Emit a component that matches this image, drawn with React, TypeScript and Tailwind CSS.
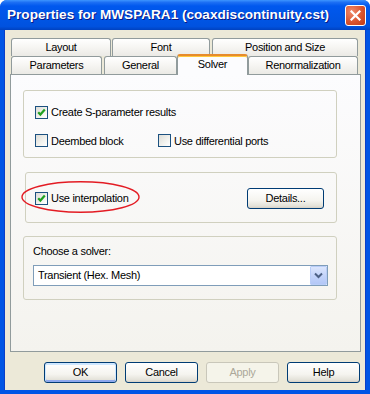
import React from 'react';

function Check({ checked }: { checked?: boolean }) {
  return (
    <span className="flex h-[13px] w-[13px] shrink-0 items-center justify-center border border-[#1C5180] bg-[linear-gradient(135deg,#DCDCD7_0%,#F3F3EF_60%,#FFFFFF_100%)]">
      {checked && (
        <svg width="9" height="9" viewBox="0 0 9 9">
          <polyline points="1.2,4.2 3.4,6.6 7.8,1.6" fill="none" stroke="#21A121" strokeWidth="2.2" />
        </svg>
      )}
    </span>
  );
}

function Btn({ label, disabled, focused, className }: { label: string; disabled?: boolean; focused?: boolean; className: string }) {
  let cls = 'flex h-[21px] items-center justify-center rounded-[3px] border text-[11px] ';
  if (disabled) cls += 'border-[#C9C7BA] bg-[#F5F4EA] text-[#ACA899] ';
  else cls += 'border-[#003C74] bg-[linear-gradient(to_bottom,#FFFFFF_0%,#F5F4EF_60%,#E3E1D8_90%,#D6D0C5_100%)] text-black ';
  if (focused) cls += 'shadow-[inset_0_1px_0_1px_#CEE7FF,inset_0_-1px_0_1px_#8DA8EE] ';
  return <div className={cls + className}>{label}</div>;
}

function Tab({ label, className }: { label: string; className: string }) {
  return (
    <div className={'flex h-[18px] items-center justify-center rounded-t-[3px] border border-b-0 border-[#919B9C] bg-[linear-gradient(to_bottom,#FFFFFF_0%,#F6F5F2_50%,#EBEAE5_100%)] text-[11px] ' + className}>
      {label}
    </div>
  );
}

export default function App() {
  return (
    <div className="h-[394px] w-[370px] overflow-hidden bg-white font-['Liberation_Sans',Arial,sans-serif] tracking-[-0.3px] text-black">
      <div className="flex h-full flex-col rounded-t-[7px] bg-[#0055E5]">
        {/* title bar */}
        <div className="flex h-[30px] shrink-0 items-center justify-between rounded-t-[7px] bg-[linear-gradient(to_bottom,#3D95FF_0%,#1C6FF4_8%,#0058EE_20%,#0055E5_60%,#0052DF_88%,#0042C0_100%)] pl-[7px] pr-[4px]">
          <span className="text-[13.6px] font-bold tracking-normal text-white [text-shadow:1px_1px_#0A1883]">
            Properties for MWSPARA1 (coaxdiscontinuity.cst)
          </span>
          <div className="flex h-[21px] w-[21px] items-center justify-center rounded-[3px] border border-white bg-[radial-gradient(circle_at_30%_30%,#F08B6C_0%,#D9542F_55%,#C23A14_100%)]">
            <svg width="11" height="11" viewBox="0 0 11 11">
              <path d="M1.5 1.5 L9.5 9.5 M9.5 1.5 L1.5 9.5" stroke="white" strokeWidth="2.2" strokeLinecap="square" />
            </svg>
          </div>
        </div>

        {/* client */}
        <div className="mx-[4px] mb-[4px] flex flex-1 flex-col border-x border-[#0A3FC8] bg-[#ECE9D8] pt-[8px]">
          <div className="ml-[6px] flex gap-[1px]">
            <Tab label="Layout" className="w-[100px]" />
            <Tab label="Font" className="w-[98px]" />
            <Tab label="Position and Size" className="ml-[1px] w-[146px]" />
          </div>
          <div className="ml-[6px] flex h-[18px] items-start">
            <Tab label="Parameters" className="w-[91px]" />
            <Tab label="General" className="ml-[2px] w-[73px]" />
            <div className="relative z-10 -mt-[2px] flex h-[21px] w-[71px] items-center justify-center rounded-t-[3px] border-x border-t-2 border-[#919B9C] border-t-[#E68B2C] bg-[#FCFCFE] pb-[2px] text-[11px] shadow-[inset_0_1px_0_#FFC83C]">
              Solver
            </div>
            <Tab label="Renormalization" className="w-[110px]" />
          </div>

          {/* tab page */}
          <div className="ml-[5px] flex h-[278px] w-[351px] flex-col border border-[#919B9C] bg-[linear-gradient(to_bottom,#FCFCFE_0%,#F4F3EE_100%)] text-[11px]">
            <div className="ml-[12px] mt-[15px] h-[68px] w-[314px] rounded-[3px] border border-[#D0D0BF] pl-[11px] pt-[13px]">
              <label className="flex items-center gap-[3px]">
                <Check checked />
                <span>Create S-parameter results</span>
              </label>
              <div className="mt-[12px] flex">
                <label className="flex w-[123px] items-center gap-[3px]">
                  <Check />
                  <span>Deembed block</span>
                </label>
                <label className="flex items-center gap-[3px]">
                  <Check />
                  <span>Use differential ports</span>
                </label>
              </div>
            </div>

            <div className="relative ml-[14px] mt-[14px] h-[51px] w-[312px] rounded-[3px] border border-[#D0D0BF] pl-[9px] pr-[12px] pt-[15px]">
              <div className="flex h-[21px] items-center justify-between">
                <label className="flex items-center gap-[3px]">
                  <Check checked />
                  <span>Use interpolation</span>
                </label>
                <Btn label="Details..." className="w-[77px]" />
              </div>
              <svg className="pointer-events-none absolute left-[-5px] top-[8px] overflow-visible" width="120" height="33" viewBox="0 0 120 33">
                <ellipse cx="59.5" cy="16" rx="58.5" ry="15.2" fill="none" stroke="#E31B23" strokeWidth="1.4" />
              </svg>
            </div>

            <div className="ml-[12px] mt-[13px] h-[64px] w-[314px] rounded-[3px] border border-[#D0D0BF] pl-[9px] pt-[8px]">
              <div className="leading-[13px]">Choose a solver:</div>
              <div className="mt-[7px] flex h-[21px] w-[295px] items-center justify-between border border-[#7F9DB9] bg-white">
                <span className="pl-[4px]">Transient (Hex. Mesh)</span>
                <div className="flex h-[19px] w-[17px] items-center justify-center rounded-[1px] border border-[#B9CDF8] bg-[linear-gradient(to_bottom,#DCE6FD_0%,#C4D4FA_50%,#B3C7F7_100%)]">
                  <svg width="9" height="7" viewBox="0 0 9 7">
                    <polyline points="1,1.5 4.5,5 8,1.5" fill="none" stroke="#4D6185" strokeWidth="2" />
                  </svg>
                </div>
              </div>
            </div>
          </div>

          <div className="mt-[10px] flex justify-end gap-[8px] pr-[5px]">
            <Btn label="OK" focused className="w-[73px]" />
            <Btn label="Cancel" className="w-[73px]" />
            <Btn label="Apply" disabled className="w-[73px]" />
            <Btn label="Help" className="w-[73px]" />
          </div>
        </div>
      </div>
    </div>
  );
}
